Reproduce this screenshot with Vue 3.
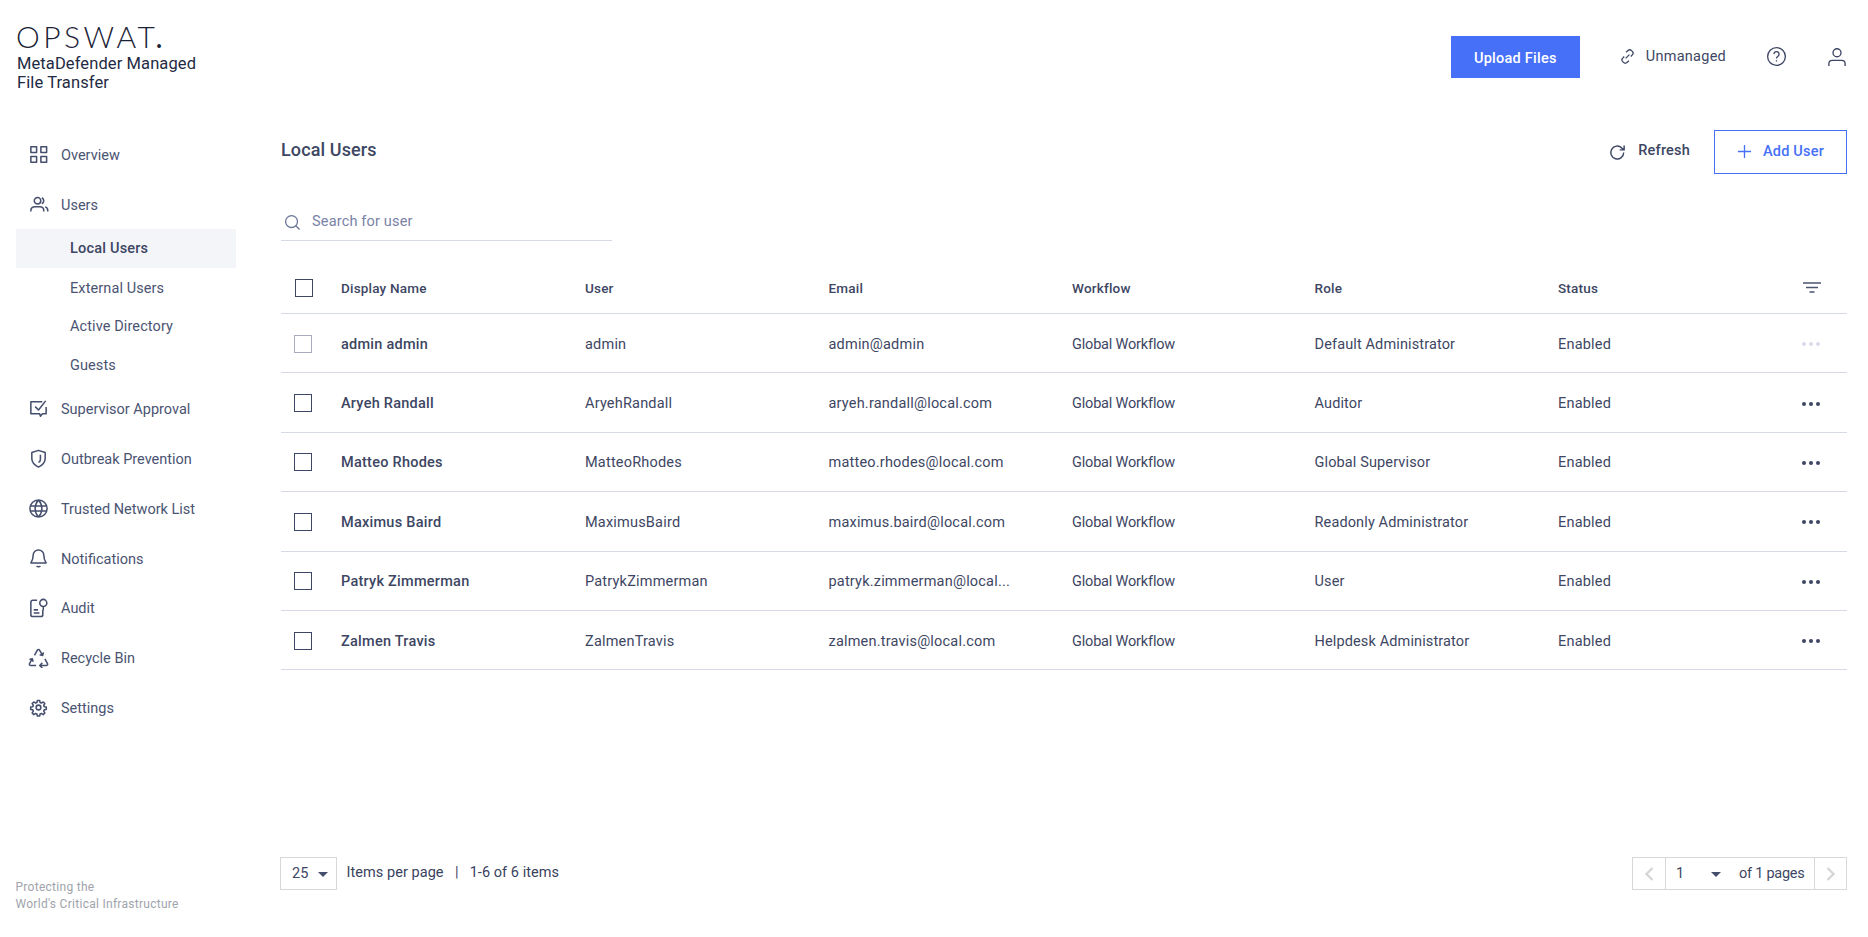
<script setup>
const nav1 = [
  { label: 'Overview', icon: 'grid' },
  { label: 'Users', icon: 'users' },
]
const subs = [
  { label: 'Local Users', active: true },
  { label: 'External Users' },
  { label: 'Active Directory' },
  { label: 'Guests' },
]
const nav2 = [
  { label: 'Supervisor Approval', icon: 'approval' },
  { label: 'Outbreak Prevention', icon: 'shield' },
  { label: 'Trusted Network List', icon: 'globe' },
  { label: 'Notifications', icon: 'bell', tight: true },
  { label: 'Audit', icon: 'audit' },
  { label: 'Recycle Bin', icon: 'recycle' },
  { label: 'Settings', icon: 'gear' },
]
const paths = {
  grid: 'M3 2.800h6v6H3zM13.500 2.800h6v6h-6zM3 13.200h6v6H3zM13.500 13.200h6v6h-6z',
  users: 'M10 3.700a3.400 3.400 0 1 0 0 6.800 3.400 3.400 0 0 0 0-6.800zM3 18.300v-1c0-2.500 2-4 4.500-4h5c2.500 0 4 1.500 4 4v1M14.500 4a3.400 3.400 0 0 1 0 6.200M18 13.500c1.700.5 2.700 1.800 2.700 3.800v1',
  approval: 'M19 9.500v7h-3.800l-2.200 2.500-.8-2.500H3V4h12M7.500 9l3.500 3.500 7.500-9.500',
  shield: 'M11 2.500l7 2.300V11c0 4.300-3 7-7 9-4-2-7-4.700-7-9V4.800zM13 7v5c0 1.500-1 2.500-2 3',
  globe: 'M11 2a9 9 0 1 0 0 18 9 9 0 0 0 0-18zM2.500 8.300h17M2.500 13.700h17M11 2c-4.700 5.200-4.700 12.800 0 18M11 2c4.700 5.200 4.700 12.800 0 18',
  bell: 'M11 2a5.600 5.600 0 0 0-5.600 5.600c0 4.900-1.900 7-2.400 8h16c-.5-1-2.400-3.100-2.400-8A5.600 5.600 0 0 0 11 2zM9 18.800c1 1 3 1 4 0',
  audit: 'M9.500 3.500H5A2 2 0 0 0 3 5.500v13a2 2 0 0 0 2 2h8.500a2 2 0 0 0 2-2v-5M16 2.500a3.700 3.700 0 1 0 0 7.400 3.700 3.700 0 0 0 0-7.400zM16 10v4M6 13.500h4.500M6 16.800h6',
  recycle: 'M6.800 8.700 9.800 3.200c.5-.9 1.800-.9 2.300 0l3.200 5.500M16.200 5.600l-.8 3.200-3.200-.8M17.700 12.500l2.700 4.800c.5 1-.2 2-1.200 2H12.500M15 16.600l-2.700 2.700 2.700 2.700M8.500 19.300H2.800c-1 0-1.700-1-1.200-2l2.800-4.800M1.500 13.200l3-.8.9 3.100',
  gear: 'M9.800 3.640h2.400l.48 2.160 1.360.56 1.920-1.200 1.680 1.680-1.200 1.920.56 1.360 2.160.48v2.400l-2.160.48-.56 1.360 1.200 1.920-1.680 1.680-1.920-1.200-1.360.56-.48 2.160H9.800l-.48-2.160-1.360-.56-1.920 1.200-1.680-1.680 1.200-1.920-.56-1.360-2.160-.48v-2.400l2.160-.48.56-1.360-1.200-1.920 1.680-1.680 1.920 1.200 1.360-.56zM11 8.500a2.500 2.500 0 1 0 0 5 2.500 2.500 0 0 0 0-5z',
}
const columns = ['Display Name', 'User', 'Email', 'Workflow', 'Role', 'Status']
const rows = [
  { name: 'admin admin', user: 'admin', email: 'admin@admin', role: 'Default Administrator', locked: true },
  { name: 'Aryeh Randall', user: 'AryehRandall', email: 'aryeh.randall@local.com', role: 'Auditor' },
  { name: 'Matteo Rhodes', user: 'MatteoRhodes', email: 'matteo.rhodes@local.com', role: 'Global Supervisor' },
  { name: 'Maximus Baird', user: 'MaximusBaird', email: 'maximus.baird@local.com', role: 'Readonly Administrator' },
  { name: 'Patryk Zimmerman', user: 'PatrykZimmerman', email: 'patryk.zimmerman@local...', role: 'User' },
  { name: 'Zalmen Travis', user: 'ZalmenTravis', email: 'zalmen.travis@local.com', role: 'Helpdesk Administrator' },
]
</script>

<template>
  <div class="app">
    <aside class="sidebar">
      <div class="brand">
        <div class="logo">OPSWAT<span class="dot">.</span></div>
        <div class="product">MetaDefender Managed<br />File Transfer</div>
      </div>
      <nav class="nav">
        <a v-for="n in nav1" :key="n.label" class="nav-item">
          <svg class="nav-icon" viewBox="0 0 22 22"><path :d="paths[n.icon]" /></svg>
          <span>{{ n.label }}</span>
        </a>
        <a v-for="s in subs" :key="s.label" class="sub-item" :class="{ active: s.active }"><span>{{ s.label }}</span></a>
        <a v-for="n in nav2" :key="n.label" class="nav-item" :class="{ tight: n.tight }">
          <svg class="nav-icon" viewBox="0 0 22 22"><path :d="paths[n.icon]" /></svg>
          <span>{{ n.label }}</span>
        </a>
      </nav>
      <div class="tagline">Protecting the<br />World's Critical Infrastructure</div>
    </aside>

    <div class="content">
      <header class="topbar">
        <button class="upload">Upload Files</button>
        <div class="unmanaged">
          <svg class="link-icon" viewBox="0 0 16 16"><path d="M6.500 3.500 8.500 1.700a2.700 2.700 0 0 1 3.800 0l.8.8a2.700 2.700 0 0 1 0 3.800L11.500 8M9.500 12.500l-2 1.800a2.700 2.700 0 0 1-3.800 0l-.8-.8a2.700 2.700 0 0 1 0-3.800L4.500 8M6 10l4-4" /></svg>
          <span>Unmanaged</span>
        </div>
        <svg class="help" viewBox="0 0 22 22"><circle cx="11" cy="11" r="9.300" /><path d="M8.300 8.500a2.700 2.700 0 1 1 4.200 2.300c-1 .6-1.500 1.100-1.500 2.200M11 15v1.300" /></svg>
        <svg class="person" viewBox="0 0 20 22"><circle cx="10" cy="6" r="4.200" /><path d="M1.500 20v-2.500c0-2 1.500-3.500 3.500-3.500h10c2 0 3.500 1.500 3.500 3.500V20" /></svg>
      </header>

      <main class="main">
        <div class="title-row">
          <h1>Local Users</h1>
          <div class="actions">
            <button class="refresh">
              <svg viewBox="0 0 20 20"><path d="M16.500 10a6.800 6.800 0 1 1-2-4.800l2 2M17 2.500v4.700h-4.700" /></svg>
              <span>Refresh</span>
            </button>
            <button class="add">
              <svg viewBox="0 0 16 16"><path d="M8 1v14M1 8h14" /></svg>
              <span>Add User</span>
            </button>
          </div>
        </div>

        <div class="search">
          <svg viewBox="0 0 18 18"><circle cx="8" cy="8" r="6.300" /><path d="m12.500 12.500 4 4" /></svg>
          <span>Search for user</span>
        </div>

        <div class="table">
          <div class="tr head">
            <div class="check-cell"><span class="box dark"></span></div>
            <div v-for="c in columns" :key="c" class="td">{{ c }}</div>
            <div class="menu-cell">
              <svg class="filter" viewBox="0 0 18 12"><path d="M0 1h18M3 5.500h12M6.500 10h5" /></svg>
            </div>
          </div>
          <div v-for="r in rows" :key="r.user" class="tr">
            <div class="check-cell"><span class="box" :class="{ faded: r.locked }"></span></div>
            <div class="td name">{{ r.name }}</div>
            <div class="td">{{ r.user }}</div>
            <div class="td">{{ r.email }}</div>
            <div class="td flow">Global Workflow</div>
            <div class="td role">{{ r.role }}</div>
            <div class="td">Enabled</div>
            <div class="menu-cell">
              <span class="dots" :class="{ off: r.locked }"><i></i><i></i><i></i></span>
            </div>
          </div>
        </div>

        <div class="pager">
          <div class="pager-left">
            <div class="select per"><span>25</span><i class="caret"></i></div>
            <span class="pager-text">Items per page</span>
            <span class="bar">|</span>
            <span class="pager-text">1-6 of 6 items</span>
          </div>
          <div class="pages">
            <span class="page-btn"><svg viewBox="0 0 12 16"><path d="M9.500 2 3.500 8l6 6" /></svg></span>
            <div class="page-mid">
              <span class="num">1</span><i class="caret"></i><span class="of">of 1 pages</span>
            </div>
            <span class="page-btn last"><svg viewBox="0 0 12 16"><path d="m2.500 2 6 6-6 6" /></svg></span>
          </div>
        </div>
      </main>
    </div>
  </div>
</template>

<style>
html, body { margin: 0; background: #fff; }
</style>

<style scoped>
.app {
  display: flex;
  height: 937px;
  width: 1868px;
  overflow: hidden;
  font-family: Roboto, "Liberation Sans", sans-serif;
  color: #3d4663;
  font-size: 14.5px;
}
.sidebar {
  width: 281px;
  flex: none;
  display: flex;
  flex-direction: column;
  position: relative;
}
.brand { padding: 21px 0 0 17px; height: 108px; box-sizing: border-box; }
.logo {
  font-family: Lato, sans-serif;
  font-weight: 300;
  font-size: 30px;
  line-height: 30px;
  letter-spacing: 3.5px;
  color: #1b2236;
  margin-left: -1px;
}
.logo .dot { margin-left: -3px; font-weight: 400; }
.product { font-size: 16.5px; line-height: 19px; color: #1f2a44; margin-top: 3px; letter-spacing: .1px; }
.nav { width: 236px; display: flex; flex-direction: column; margin-top: 21px; }
.nav-item { height: 50.2px; display: flex; align-items: center; padding-left: 28px; gap: 12px; color: #4a5472; }
.nav-item.tight { height: 48.5px; }
.nav-item span { padding-top: 2px; }
.nav-icon { width: 21px; height: 21px; fill: none; stroke: #454e6c; stroke-width: 1.6; stroke-linejoin: round; flex: none; }
.sub-item { height: 38.5px; display: flex; align-items: center; margin-left: 16px; padding-left: 54px; color: #4a5472; letter-spacing: .1px; }
.sub-item span { padding-top: 2px; }
.sub-item.active { background: #f3f5f9; font-weight: 500; color: #3d4663; letter-spacing: .2px; }
.sub-item.active span { padding-top: 0; }
.tagline { position: absolute; left: 15.5px; top: 879px; font-size: 12px; line-height: 16.5px; color: #a0a3ab; letter-spacing: .28px; }

.content { flex: 1; min-width: 0; display: flex; flex-direction: column; }
.topbar { height: 108px; flex: none; display: flex; align-items: flex-start; padding: 36px 21px 0 0; box-sizing: border-box; justify-content: flex-end; }
.upload {
  width: 129px; height: 42px; border: 0; background: #4670f8; color: #fff; font: 500 14.5px Roboto, sans-serif; letter-spacing: .25px; padding: 2px 0 0; margin-right: 1px;
}
.unmanaged { display: flex; align-items: center; gap: 11px; margin-left: 39px; height: 40px; color: #3d4663; letter-spacing: .25px; }
.link-icon { width: 15px; height: 15px; fill: none; stroke: #3d4663; stroke-width: 1.4; }
.help { width: 21px; height: 21px; fill: none; stroke: #3d4663; stroke-width: 1.4; margin: 10px 0 0 40px; }
.person { width: 20px; height: 21px; fill: none; stroke: #3d4663; stroke-width: 1.4; margin: 11px 0 0 40px; }

.main { flex: 1; display: flex; flex-direction: column; padding: 0 21px 47px 0; min-height: 0; }
.title-row { display: flex; justify-content: space-between; align-items: flex-start; height: 68.5px; margin-top: 22px; flex: none; }
h1 { margin: 8px 0 0; font-size: 18px; font-weight: 500; line-height: 24px; letter-spacing: .12px; color: #3d4663; }
.actions { display: flex; align-items: center; height: 44px; }
.refresh, .add { font: inherit; background: none; display: flex; align-items: center; letter-spacing: .2px; }
.refresh { border: 0; color: #3d4663; gap: 11px; font-weight: 500; margin-right: 24px; padding: 0; }
.refresh span { margin-bottom: 3px; }
.refresh svg { width: 19px; height: 19px; fill: none; stroke: #3d4663; stroke-width: 1.5; }
.add { width: 133px; height: 44px; border: 1px solid #4670f8; box-sizing: border-box; color: #4670f8; justify-content: center; gap: 11px; font-weight: 500; padding: 0 0 2px; }
.add svg { width: 15px; height: 15px; fill: none; stroke: #4670f8; stroke-width: 1.4; margin-top: 1px; }

.search { width: 331px; height: 42px; border-bottom: 1px solid #d6dae6; display: flex; align-items: center; gap: 11px; padding: 5px 0 0 3px; box-sizing: border-box; color: #7a82a6; letter-spacing: .17px; flex: none; }
.search svg { width: 17px; height: 17px; fill: none; stroke: #6d7699; stroke-width: 1.4; margin-top: 2px; }

.table { margin-top: 22.5px; flex: none; }
.tr { display: grid; grid-template-columns: 60px 244px 243.5px 243.5px 242.5px 243.5px 1fr 60px; height: 59.4px; align-items: center; border-bottom: 1px solid #d6dae6; box-sizing: border-box; letter-spacing: .2px; padding-top: 2px; }
.head { height: 51px; font-weight: 500; font-size: 13.5px; color: #3d4663; padding-top: 0; }
.td { white-space: nowrap; min-width: 0; }
.name { font-weight: 500; letter-spacing: .25px; }
.flow { letter-spacing: -.18px; }
.role { letter-spacing: .13px; }
.check-cell { padding-left: 13px; display: flex; }
.tr:not(.head) .check-cell { margin-top: -1px; }
.box { width: 18px; height: 18px; border: 1px solid #3d4663; box-sizing: border-box; }
.box.dark { margin-left: 1px; }
.box.faded { border-color: #a7abbd; }
.menu-cell { display: flex; justify-content: flex-start; padding-left: 16px; }
.filter { width: 18px; height: 12px; fill: none; stroke: #4a5472; stroke-width: 1.5; }
.dots { display: flex; gap: 3px; margin-left: -1px; }
.dots i { width: 4px; height: 4px; border-radius: 50%; background: #3d4663; }
.dots.off i { background: #d9dce8; }

.pager { margin-top: auto; display: flex; justify-content: space-between; align-items: center; font-size: 14.5px; }
.pager-left { display: flex; align-items: center; margin-left: -1px; }
.select { display: flex; align-items: center; border: 1px solid #d8d8d8; box-sizing: border-box; }
.per { width: 57px; height: 33px; padding-left: 11px; gap: 10px; }
.caret { width: 0; height: 0; border-left: 5px solid transparent; border-right: 5px solid transparent; border-top: 5px solid #454e6c; margin-top: 2px; }
.pager-text { color: #3a4260; margin-top: -3px; letter-spacing: .05px; }
.pager-left .select + .pager-text { margin-left: 9.5px; }
.bar { margin: -3px 11px 0 11.5px; }
.pages { display: flex; height: 33px; border: 1px solid #d8d8d8; box-sizing: border-box; }
.page-btn { width: 32px; display: flex; align-items: center; justify-content: center; }
.page-btn.last { width: 31px; }
.page-btn svg { width: 12px; height: 16px; fill: none; stroke: #d6d6d6; stroke-width: 2.4; }
.page-mid { width: 150px; display: flex; align-items: center; border-left: 1px solid #d8d8d8; border-right: 1px solid #d8d8d8; box-sizing: border-box; padding-left: 10px; }
.num { width: 35px; }
.of { margin-left: 18px; white-space: nowrap; letter-spacing: -.25px; }
</style>
